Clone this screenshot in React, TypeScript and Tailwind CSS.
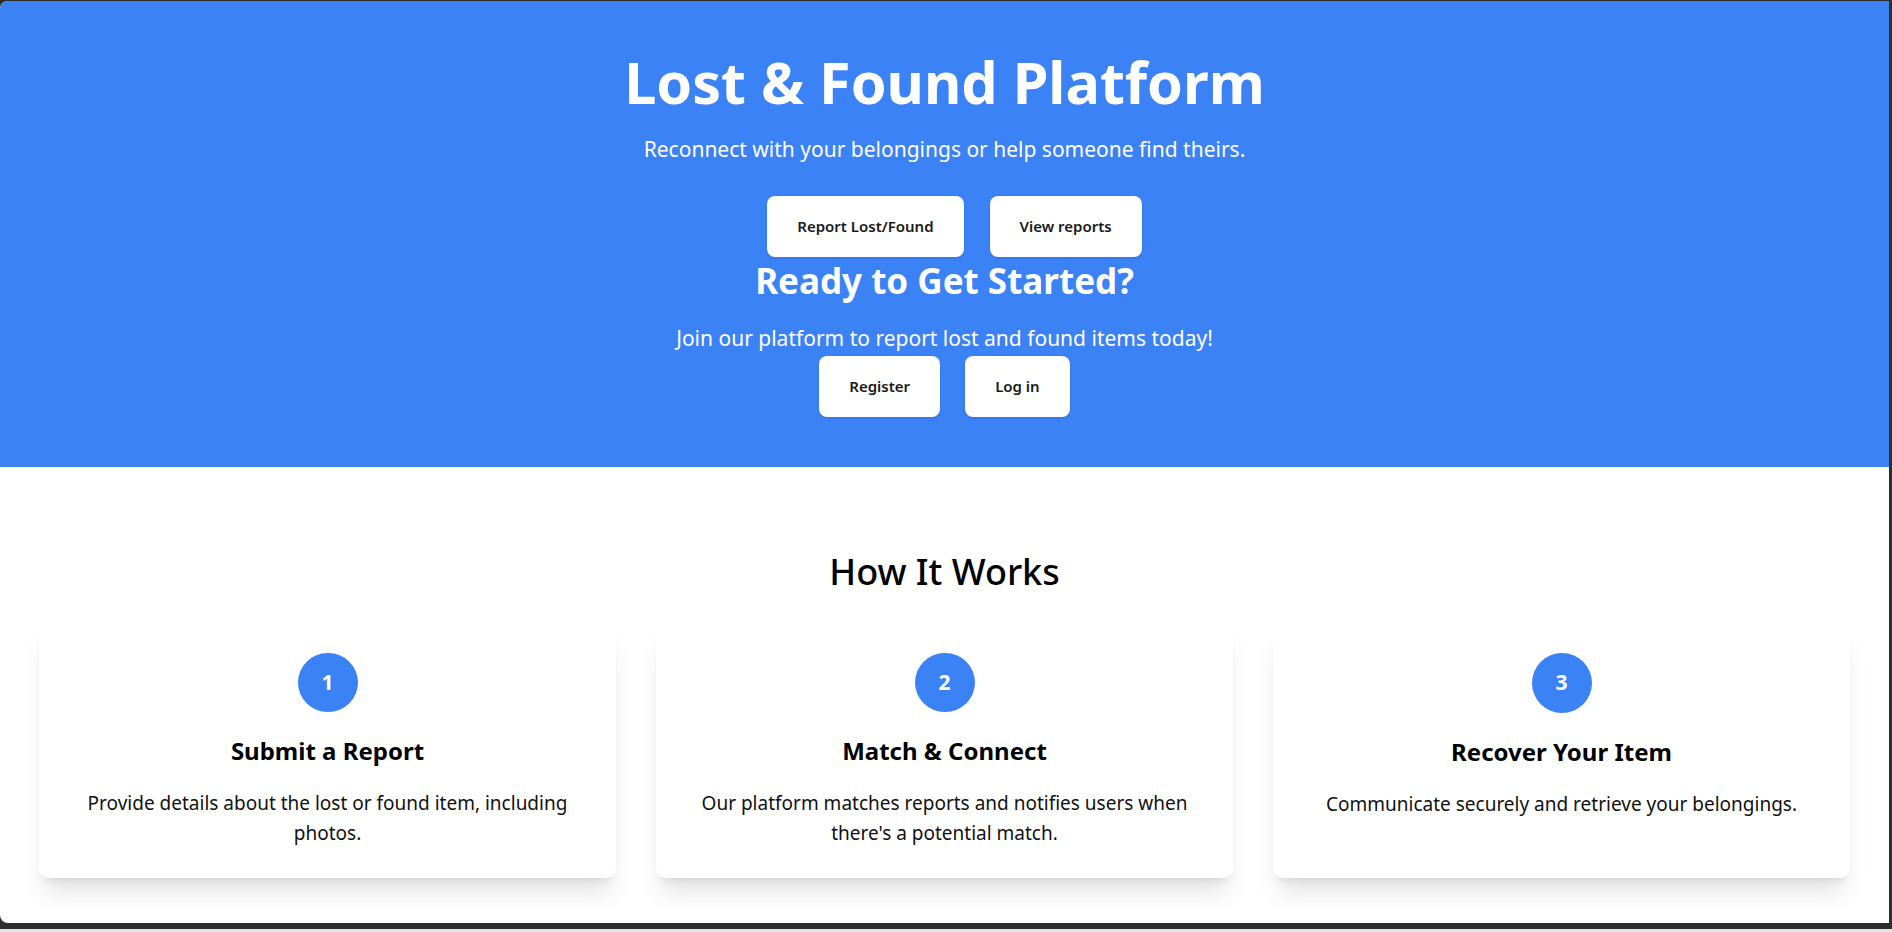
import React from "react";

const steps = [
  {
    n: "1",
    title: "Submit a Report",
    desc: "Provide details about the lost or found item, including photos.",
  },
  {
    n: "2",
    title: "Match & Connect",
    desc: "Our platform matches reports and notifies users when there's a potential match.",
  },
  {
    n: "3",
    title: "Recover Your Item",
    desc: "Communicate securely and retrieve your belongings.",
  },
];

function HeroButton({ children }: { children: React.ReactNode }) {
  return (
    <button className="h-[61px] rounded-lg bg-white px-[30px] text-[15px] font-semibold text-[#1a1a1a] shadow-sm">
      {children}
    </button>
  );
}

export default function App() {
  return (
    <div className="flex h-[932px] w-[1892px] flex-col overflow-hidden bg-[#2e2e2e] font-['Noto_Sans',sans-serif]">
      <div className="h-[1px] shrink-0" />
      <div className="flex h-[922px] shrink-0">
        <div className="flex flex-1 flex-col overflow-hidden rounded-l-[8px] bg-white">
          {/* Hero */}
          <section className="flex h-[466px] shrink-0 flex-col items-center bg-[#3b82f6] pt-[53px] text-center text-white">
            <h1 className="text-[57.5px] font-bold leading-[57.5px]">Lost &amp; Found Platform</h1>
            <p className="mt-[23px] text-[21px] leading-[28px]">
              Reconnect with your belongings or help someone find theirs.
            </p>
            <div className="mt-[33px] flex gap-[26px] pl-[20px]">
              <HeroButton>Report Lost/Found</HeroButton>
              <HeroButton>View reports</HeroButton>
            </div>
            <h2 className="mt-[4px] text-[35px] font-bold leading-[40px]">Ready to Get Started?</h2>
            <p className="mt-[23px] text-[21px] leading-[28px]">
              Join our platform to report lost and found items today!
            </p>
            <div className="mt-[4px] flex gap-[25px]">
              <HeroButton>Register</HeroButton>
              <HeroButton>Log in</HeroButton>
            </div>
          </section>

          {/* How it works */}
          <section className="flex flex-col items-center px-[39px] pt-[85px]">
            <h2 className="text-[36px] font-medium leading-[40px] text-black">How It Works</h2>
            <div className="mt-[31px] grid w-full grid-cols-3 gap-[40px]">
              {steps.map((s) => (
                <div
                  key={s.n}
                  className="flex h-[255px] flex-col items-center rounded-[10px] bg-white p-[30px] text-center shadow-xl"
                >
                  <div className="flex h-[60px] w-[60px] items-center justify-center rounded-full bg-[#3b82f6] text-[21px] font-bold text-white">
                    {s.n}
                  </div>
                  <h3 className="mt-[23px] text-[24px] font-bold leading-[32px] text-black">{s.title}</h3>
                  <p className="mt-[21px] text-[19px] leading-[30px] text-[#111]">{s.desc}</p>
                </div>
              ))}
            </div>
          </section>
        </div>
        <div className="w-[3px] shrink-0" />
      </div>
      <div className="h-[6px] shrink-0" />
      <div className="h-[3px] shrink-0 bg-[#e4e4e4]" />
    </div>
  );
}
